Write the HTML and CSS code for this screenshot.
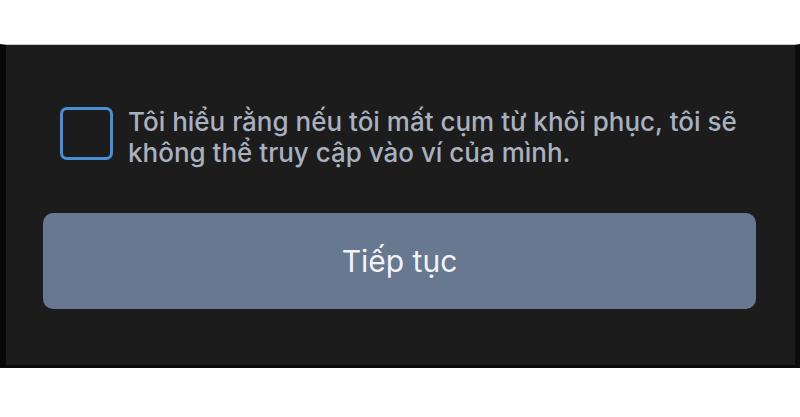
FILE: index.html
```html
<!DOCTYPE html>
<html lang="vi">
<head>
  <meta charset="UTF-8">
  <meta name="viewport" content="width=device-width, initial-scale=1.0">
  <title>Cụm từ khôi phục</title>
  <link rel="stylesheet" href="styles.css">
</head>
<body>
  <div class="panel">
    <label class="agree">
      <span class="checkbox"></span> <!-- empty, not checked yet -->
      <span class="agree-text">Tôi hiểu rằng nếu tôi mất cụm từ khôi phục, tôi sẽ không thể truy cập vào ví của mình.</span>
    </label>
    <button class="continue-button">Tiếp tục</button>
  </div>
</body>
</html>
```

FILE: styles.css
```css
body {
  background-color: white;
  margin: 0;
  padding: 44px 0 0 0;
  font-family: "Inter", "Liberation Sans", Arial, sans-serif;
}
.panel {
  height: 324px;
  box-sizing: border-box;
  background-color: #1c1c1d;
  border-top: 1px solid #c8c8c8;
  border-left: 6px solid #070707;
  border-right: 5px solid #0c0c0c;
  border-bottom: 3px solid #0a0a0a;
  padding: 61px 39px 0 37px;
}
.agree {
  display: flex;
  align-items: flex-start;
  margin-left: 17px;
}
.checkbox {
  flex: none;
  width: 53px;
  height: 53px;
  box-sizing: border-box;
  border: 3px solid #4a8fd6;
  border-radius: 7px;
  margin-top: 1px;
  margin-right: 15px;
}
.agree-text {
  color: #a9b1bf;
  font-size: 26px;
  font-weight: 500;
  line-height: 31px;
  width: 640px;
}
/* Grey-blue "Tiếp tục" button */
.continue-button {
  display: block;
  width: 100%;
  height: 96px;
  margin-top: 45px;
  background-color: #687890;
  color: #f2f3f5;
  font-family: inherit;
  font-size: 30px;
  border: none;
  border-radius: 10px;
}
```
